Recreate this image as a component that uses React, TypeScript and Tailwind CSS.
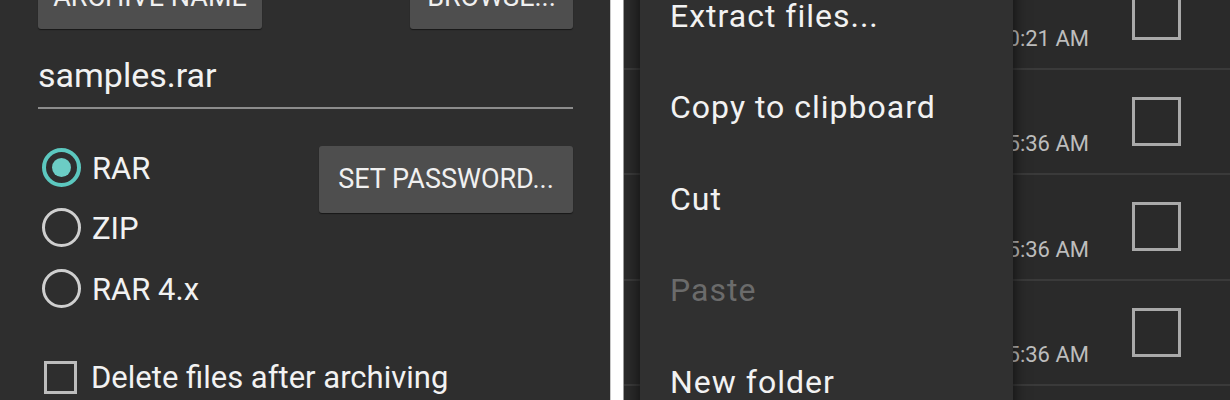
const times = ['6/14/13 10:21 AM', '6/14/13 5:36 AM', '6/14/13 5:36 AM', '6/14/13 5:36 AM'];

const menuItems = [
  { label: 'Extract files...', disabled: false },
  { label: 'Copy to clipboard', disabled: false },
  { label: 'Cut', disabled: false },
  { label: 'Paste', disabled: true },
  { label: 'New folder', disabled: false },
];

function Radio({ checked, label }: { checked?: boolean; label: string }) {
  return (
    <div className="flex items-center h-[60.5px]">
      {checked ? (
        <div className="ml-[4px] w-[39px] h-[39px] rounded-full border-[4px] border-[#5cc8bf] flex items-center justify-center">
          <div className="w-[19px] h-[19px] rounded-full bg-[#6ccdc5]" />
        </div>
      ) : (
        <div className="ml-[4px] w-[39px] h-[39px] rounded-full border-[3px] border-[#cfcfcf]" />
      )}
      <span className="ml-[11px] pt-[3px] text-[31px] text-[#f2f2f2]">{label}</span>
    </div>
  );
}

function ArchivePanel() {
  return (
    <div className="w-[610px] h-full shrink-0 bg-[#2e2e2e] flex flex-col pl-[38px] pr-[37px]">
      {/* buttons at the top, mostly scrolled out */}
      <div className="flex justify-between -mt-[35px] h-[64px] shrink-0">
        <button className="w-[224px] h-full rounded-[3px] bg-[#4e4e4e] shadow-[0_1px_1px_rgba(0,0,0,0.5)] text-[27px] text-[#f0f0f0]">
          ARCHIVE NAME
        </button>
        <button className="w-[163px] h-full rounded-[3px] bg-[#4e4e4e] shadow-[0_1px_1px_rgba(0,0,0,0.5)] text-[27px] text-[#f0f0f0]">
          BROWSE...
        </button>
      </div>

      <div className="pt-[29px] pb-[14px] border-b-2 border-[#8c8c8c] shrink-0">
        <div className="text-[34px] text-[#f2f2f2] leading-[35px]">samples.rar</div>
      </div>

      <div className="flex justify-between mt-[28px] shrink-0">
        <div className="flex flex-col">
          <Radio checked label="RAR" />
          <Radio label="ZIP" />
          <Radio label="RAR 4.x" />
        </div>
        <button className="self-start mt-[9px] w-[254px] h-[67px] rounded-[3px] bg-[#4e4e4e] shadow-[0_1px_1px_rgba(0,0,0,0.5)] text-[27px] text-[#f0f0f0]">
          SET PASSWORD...
        </button>
      </div>

      <div className="flex items-center h-[61px] mt-[28px] shrink-0">
        <div className="ml-[6px] w-[33px] h-[33px] border-[3px] border-[#bdbdbd]" />
        <span className="ml-[14px] pt-[3px] text-[31px] text-[#f2f2f2]">Delete files after archiving</span>
      </div>
    </div>
  );
}

function FileList() {
  return (
    <div className="relative flex-1 h-full bg-[#2a2a2a] overflow-hidden">
      <div className="-mt-[36px]">
        {times.map((t, i) => (
          <div key={i} className="h-[105.5px] border-b-2 border-[#3a3a3a] flex items-center justify-end pr-[49px]">
            <span className="self-end mb-[13px] text-[22px] text-[#bdbdbd]">{t}</span>
            <div className="ml-[43px] w-[49px] h-[49px] border-[3px] border-[#a9a9a9]" />
          </div>
        ))}
      </div>

      {/* popup menu */}
      <div className="absolute left-[16px] top-[-30px] w-[373px] bg-[#303030] shadow-[0_0_14px_rgba(0,0,0,0.7)]">
        {menuItems.map((m) => (
          <div
            key={m.label}
            className={`h-[91.5px] flex items-center pl-[30px] text-[32px] tracking-[1px] ${m.disabled ? 'text-[#6b6b6b]' : 'text-[#f2f2f2]'}`}
          >
            {m.label}
          </div>
        ))}
      </div>
    </div>
  );
}

export default function App() {
  return (
    <div className="w-[1230px] h-[400px] overflow-hidden flex bg-white font-['Roboto',sans-serif]">
      <ArchivePanel />
      <div className="w-px bg-[#c8c8c8]" />
      <div className="w-[12px] bg-white" />
      <div className="w-px bg-[#9a9a9a]" />
      <FileList />
    </div>
  );
}
